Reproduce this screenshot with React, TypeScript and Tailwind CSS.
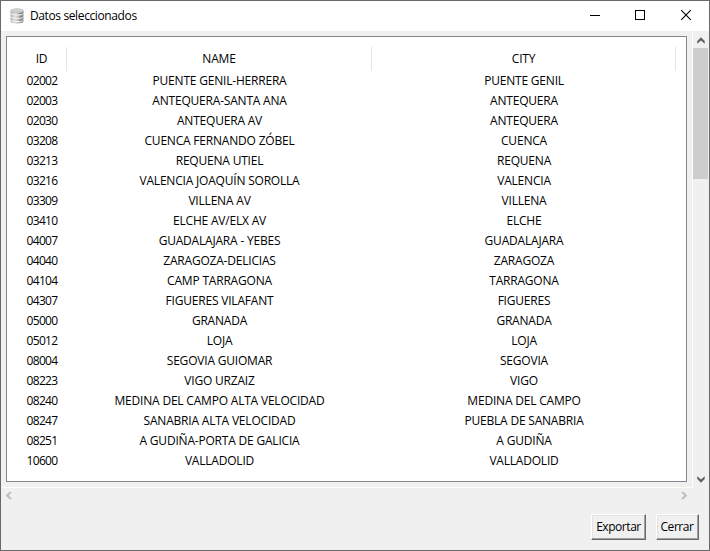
const rows: [string, string, string][] = [
  ["02002", "PUENTE GENIL-HERRERA", "PUENTE GENIL"],
  ["02003", "ANTEQUERA-SANTA ANA", "ANTEQUERA"],
  ["02030", "ANTEQUERA AV", "ANTEQUERA"],
  ["03208", "CUENCA FERNANDO ZÓBEL", "CUENCA"],
  ["03213", "REQUENA UTIEL", "REQUENA"],
  ["03216", "VALENCIA JOAQUÍN SOROLLA", "VALENCIA"],
  ["03309", "VILLENA AV", "VILLENA"],
  ["03410", "ELCHE AV/ELX AV", "ELCHE"],
  ["04007", "GUADALAJARA - YEBES", "GUADALAJARA"],
  ["04040", "ZARAGOZA-DELICIAS", "ZARAGOZA"],
  ["04104", "CAMP TARRAGONA", "TARRAGONA"],
  ["04307", "FIGUERES VILAFANT", "FIGUERES"],
  ["05000", "GRANADA", "GRANADA"],
  ["05012", "LOJA", "LOJA"],
  ["08004", "SEGOVIA GUIOMAR", "SEGOVIA"],
  ["08223", "VIGO URZAIZ", "VIGO"],
  ["08240", "MEDINA DEL CAMPO ALTA VELOCIDAD", "MEDINA DEL CAMPO"],
  ["08247", "SANABRIA ALTA VELOCIDAD", "PUEBLA DE SANABRIA"],
  ["08251", "A GUDIÑA-PORTA DE GALICIA", "A GUDIÑA"],
  ["10600", "VALLADOLID", "VALLADOLID"],
];

function DatabaseIcon() {
  return (
    <svg className="ml-[8px] h-4 w-4" viewBox="0 0 16 16">
      <defs>
        <linearGradient id="metal" x1="0" x2="1">
          <stop offset="0" stopColor="#b0b0b0" />
          <stop offset=".35" stopColor="#dedede" />
          <stop offset="1" stopColor="#858585" />
        </linearGradient>
      </defs>
      <path d="M1.5 2.5v11c0 1.2 2.8 2 6.5 2s6.5-.8 6.5-2v-11z" fill="url(#metal)" />
      <ellipse cx="8" cy="2.6" rx="6.5" ry="2" fill="#cfcfcf" stroke="#bbb" strokeWidth=".5" />
      <path d="M1.5 5.5c1 2 12 2 13 0M1.5 8.8c1 2 12 2 13 0M1.5 12c1 2 12 2 13 0" fill="none" stroke="#f8f8f8" strokeWidth="1" />
      <path d="M10 5.6h3.5M10 8.9h3.5M10 12.2h3.5" stroke="#777" strokeWidth=".8" />
    </svg>
  );
}

function Chevron({ turn, color }: { turn: string; color: string }) {
  return (
    <svg className={`h-[7px] w-[8px] ${turn}`} viewBox="0 0 8 7">
      <path d="M4 .2 7.7 4V6.7L4 3.4.3 6.7V4z" fill={color} />
    </svg>
  );
}

function ToolButton({ label, size }: { label: string; size: string }) {
  return (
    <button className={`${size} flex h-[26px] items-center justify-center whitespace-nowrap border border-t-white border-l-white border-r-[#696969] border-b-[#696969] bg-[#f0f0f0] shadow-[inset_-1px_-1px_0_#a0a0a0,inset_1px_1px_0_#e3e3e3]`}>
      {label}
    </button>
  );
}

export default function App() {
  return (
    <div className="flex h-[551px] w-[710px] flex-col overflow-hidden border border-[#69696b] bg-[#f0f0f0] font-['Open_Sans','Noto_Sans',sans-serif] text-[12px] leading-[20px] tracking-[-0.2px] text-black">
      <header className="flex h-[30px] shrink-0 items-center bg-white">
        <DatabaseIcon />
        <span className="ml-[5px] grow text-[12px] tracking-[-0.38px]">Datos seleccionados</span>
        <svg className="h-[30px] w-[138px]" viewBox="0 0 138 30" fill="none" stroke="#000">
          <path d="M19 14.5h10" shapeRendering="crispEdges" />
          <path d="M64.5 9.5h9v9h-9z" shapeRendering="crispEdges" />
          <path d="m110.2 9.2 9.6 9.6m0-9.6-9.6 9.6" strokeWidth="1.1" />
        </svg>
      </header>

      <div className="flex h-[456px] shrink-0">
        <main className="w-[691px] shrink-0 pt-[5px] pl-[5px]">
          <div className="h-[446px] w-[681px] border border-[#828790] bg-white pt-[10px] pl-[10px]">
            <div className="grid h-[24px] grid-cols-[50px_305px_304px] text-center leading-[24px]">
              <div className="border-r border-[#e5e5e5]">ID</div>
              <div className="border-r border-[#e5e5e5]">NAME</div>
              <div className="border-r border-[#e5e5e5]">CITY</div>
            </div>
            <div>
              {rows.map(([id, name, city]) => (
                <div key={id} className="grid h-[20px] grid-cols-[50px_305px_304px] whitespace-nowrap text-center">
                  <span className="tracking-[-0.65px]">{id}</span>
                  <span>{name}</span>
                  <span>{city}</span>
                </div>
              ))}
            </div>
          </div>
        </main>
        <aside className="flex w-[17px] shrink-0 flex-col items-center border-l border-white">
          <div className="flex h-[17px] items-center pt-px"><Chevron turn="" color="#606060" /></div>
          <div className="h-[131px] w-[15px] self-start bg-[#cdcdcd]" />
          <div className="grow" />
          <div className="flex h-[17px] items-center pt-px"><Chevron turn="rotate-180" color="#606060" /></div>
        </aside>
      </div>

      <div className="flex h-[17px] w-[691px] shrink-0 items-center justify-between border-t border-white pr-[4px] pb-[2px] pl-[4px]">
        <Chevron turn="-rotate-90" color="#bfbfbf" />
        <Chevron turn="rotate-90" color="#bfbfbf" />
      </div>

      <footer className="flex justify-end gap-[10px] pt-[10px] pr-[10px]">
        <ToolButton label="Exportar" size="w-[55px] tracking-[-0.45px]" />
        <ToolButton label="Cerrar" size="w-[43px] tracking-[-0.45px] pr-px" />
      </footer>
    </div>
  );
}
